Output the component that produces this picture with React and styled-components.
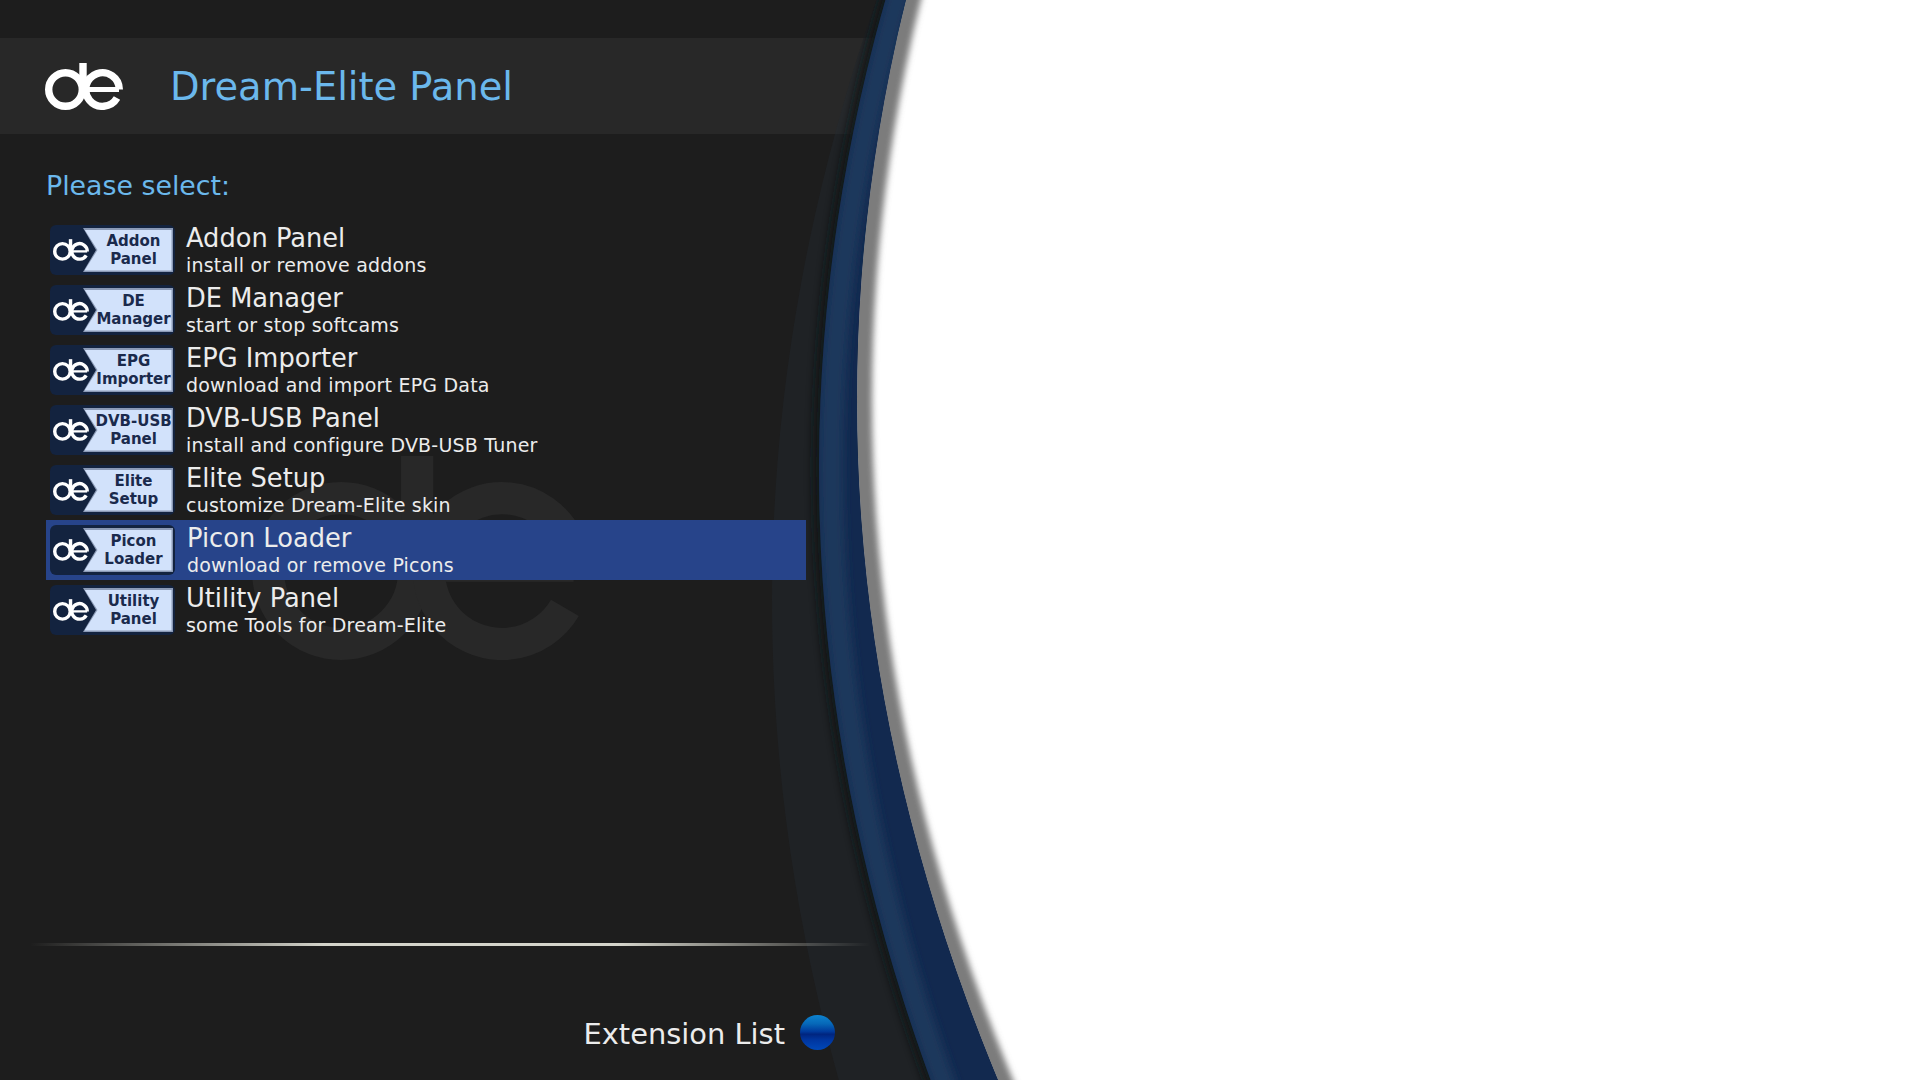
import React from "react";
import styled, { createGlobalStyle } from "styled-components";

const Global = createGlobalStyle`
  html, body { margin: 0; padding: 0; background: #fff; }
  body { font-family: "DejaVu Sans", "Liberation Sans", sans-serif; overflow: hidden; }
`;

const Page = styled.div`
  position: relative;
  width: 1920px;
  height: 1080px;
  overflow: hidden;
  background: #1d1d1d;
  display: flex;
  flex-direction: column;
`;

const Header = styled.header`
  margin-top: 38px;
  height: 96px;
  background: #282828;
  display: flex;
  align-items: center;
  padding-left: 45px;
  gap: 48px;
`;

const HeaderLogo = styled.svg`
  width: 78px;
  height: 47px;
  flex: none;
  color: #fff;
`;

const HeaderTitle = styled.h1`
  margin: 1px 0 0 -1px;
  font-size: 38.4px;
  font-weight: 400;
  color: #6bb8ec;
`;

const Main = styled.main`
  position: relative;
  z-index: 2;
  flex: 1;
  width: 880px;
  display: flex;
  flex-direction: column;
  padding: 0 0 0 46px;
  box-sizing: border-box;
`;

const Prompt = styled.div`
  margin-top: 34px;
  height: 52px;
  font-size: 26.8px;
  line-height: 36px;
  color: #6bb8ec;
`;

const List = styled.ul`
  list-style: none;
  margin: 0;
  padding: 0;
  width: 760px;
`;

const Row = styled.li`
  height: 60px;
  display: flex;
  align-items: center;
  background: ${(p) => (p.$selected ? "#27448a" : "transparent")};
  padding-left: 4px;
`;

const Badge = styled.div`
  width: 125px;
  height: 50px;
  box-sizing: border-box;
  padding: 3px 2px 3px 3px;
  border-radius: 6px;
  background: #13233f;
  display: flex;
  align-items: stretch;
  flex: none;
`;

const BadgeLogo = styled.svg`
  width: 36px;
  height: 22px;
  margin: 11px -6px 0 0;
  flex: none;
  position: relative;
  z-index: 1;
  color: #fff;
`;

const Plate = styled.div`
  flex: 1;
  padding: 1.5px;
  background: #8b9ab6;
  clip-path: polygon(0 0, 100% 0, 100% 100%, 0 100%, 13px 50%);
  display: flex;
`;

const PlateFace = styled.div`
  flex: 1;
  background: #d2e2fb;
  clip-path: polygon(0 0, 100% 0, 100% 100%, 0 100%, 13px 50%);
  display: flex;
  align-items: center;
  justify-content: center;
  padding-left: 11px;
  font-size: 15px;
  line-height: 18px;
  font-weight: 700;
  color: #1a2a4c;
  text-align: center;
  white-space: pre;
`;

const RowText = styled.div`
  align-self: flex-start;
  margin: 1px 0 0 ${(p) => (p.$selected ? 12 : 11)}px;
  display: flex;
  flex-direction: column;
`;

const RowTitle = styled.div`
  font-size: 25.7px;
  line-height: 34px;
  color: #ececec;
`;

const RowSub = styled.div`
  font-size: 19px;
  line-height: 21px;
  letter-spacing: 0.2px;
  color: #ececec;
`;

const Divider = styled.div`
  position: absolute;
  left: 30px;
  top: 809px;
  width: 840px;
  height: 3px;
  background: linear-gradient(90deg, rgba(222,222,212,0) 0%, rgba(222,222,212,0.95) 35%, rgba(222,222,212,0.95) 70%, rgba(222,222,212,0) 100%);
`;

const Footer = styled.footer`
  margin-top: auto;
  height: 65px;
  margin-bottom: 14px;
  display: flex;
  justify-content: flex-end;
  align-items: center;
  gap: 15px;
  width: 789px;
`;

const FooterLabel = styled.span`
  font-size: 28.9px;
  color: #ececec;
`;

const Ball = styled.span`
  width: 35px;
  height: 35px;
  border-radius: 50%;
  flex: none;
  margin-top: -2px;
  background: linear-gradient(180deg, #0d83cf 0%, #0668b8 25%, #003a9c 47%, #00257f 55%, #0036a0 72%, #0048b8 100%);
`;

const Watermark = styled.svg`
  position: absolute;
  left: 252px;
  top: 456px;
  width: 339px;
  height: 204px;
  color: #282828;
`;

const Curve = styled.svg`
  position: absolute;
  inset: 0;
  width: 1920px;
  height: 1080px;
`;

function spline(points) {
  let d = `M${points[0][0]} ${points[0][1]}`;
  for (let i = 0; i < points.length - 1; i++) {
    const p0 = points[Math.max(i - 1, 0)];
    const p1 = points[i];
    const p2 = points[i + 1];
    const p3 = points[Math.min(i + 2, points.length - 1)];
    const c1x = p1[0] + (p2[0] - p0[0]) / 6;
    const c1y = p1[1] + (p2[1] - p0[1]) / 6;
    const c2x = p2[0] - (p3[0] - p1[0]) / 6;
    const c2y = p2[1] - (p3[1] - p1[1]) / 6;
    d += ` C${c1x} ${c1y} ${c2x} ${c2y} ${p2[0]} ${p2[1]}`;
  }
  return d;
}

const parabola = (x0, k, c, dx = 0) => {
  const pts = [];
  for (let y = -20; y <= 1180; y += 60) pts.push([x0 + dx + k * (y - c) * (y - c), y]);
  return pts;
};

const blueLeft = parabola(819, 3.0e-4, 470);
const blueRight = parabola(857, 3.05e-4, 400);
const slateLeft = parabola(772, 2.9e-4, 600);

const rev = (pts) => [...pts].reverse();
const continueTo = (pts) => spline(pts).replace(/^M/, "L");

const bandPath = `${spline(blueLeft)} ${continueTo(rev(blueRight))} Z`;
const slatePath = `${spline(slateLeft)} ${continueTo(rev(blueRight))} Z`;
const shadowPath = `${spline(parabola(857, 3.05e-4, 400, 15))} L700 1180 L700 -20 Z`;
const whitePath = `${spline(blueRight)} L1930 1180 L1930 -20 Z`;
const bandLight = `${spline(blueLeft)} ${continueTo(rev(parabola(819, 3.0e-4, 470, 24)))} Z`;

function DeMark() {
  return (
    <g fill="none" stroke="currentColor">
      <circle cx="20.5" cy="26.5" r="16.8" strokeWidth="7.4" />
      <path d="M38 0V26" strokeWidth="7.4" />
      <path d="M41 26.5H74" strokeWidth="5" />
      <path d="M74.3 26.5A16.8 16.8 0 1 0 72 35" strokeWidth="7.4" />
    </g>
  );
}

const items = [
  ["Addon\nPanel", "Addon Panel", "install or remove addons"],
  ["DE\nManager", "DE Manager", "start or stop softcams"],
  ["EPG\nImporter", "EPG Importer", "download and import EPG Data"],
  ["DVB-USB\nPanel", "DVB-USB Panel", "install and configure DVB-USB Tuner"],
  ["Elite\nSetup", "Elite Setup", "customize Dream-Elite skin"],
  ["Picon\nLoader", "Picon Loader", "download or remove Picons"],
  ["Utility\nPanel", "Utility Panel", "some Tools for Dream-Elite"],
];

export default function App() {
  return (
    <Page>
      <Global />
      <Header>
        <HeaderLogo viewBox="0 0 78 47">
          <DeMark />
        </HeaderLogo>
        <HeaderTitle>Dream-Elite Panel</HeaderTitle>
      </Header>
      <Watermark viewBox="0 0 78 47" preserveAspectRatio="none">
        <DeMark />
      </Watermark>
      <Curve viewBox="0 0 1920 1080">
        <defs>
          <filter id="b3" x="-10%" y="-10%" width="120%" height="120%"><feGaussianBlur stdDeviation="3" /></filter>
          <filter id="b4" x="-20%" y="-10%" width="140%" height="120%"><feGaussianBlur stdDeviation="4" /></filter>
          <clipPath id="band"><path d={bandPath} /></clipPath>
          <clipPath id="slate"><path d={slatePath} /></clipPath>
          <clipPath id="outside"><path d={whitePath} /></clipPath>
        </defs>
        <path d={slatePath} fill="rgba(34,42,50,0.4)" />
        <g clipPath="url(#slate)">
          <path d={spline(blueLeft)} fill="none" stroke="#111315" strokeWidth="12" filter="url(#b4)" opacity="0.85" />
        </g>
        <path d={whitePath} fill="#fff" />
        <g clipPath="url(#outside)">
          <path d={shadowPath} fill="#7c7c7c" filter="url(#b3)" />
        </g>
        <path d={bandPath} fill="#12294f" />
        <g clipPath="url(#band)">
          <path d={bandLight} fill="#1e375c" filter="url(#b4)" />
        </g>
      </Curve>
      <Main>
        <Prompt>Please select:</Prompt>
        <List>
          {items.map(([badge, title, sub], i) => (
            <Row key={title} $selected={i === 5}>
              <Badge>
                <BadgeLogo viewBox="0 0 78 47">
                  <DeMark />
                </BadgeLogo>
                <Plate>
                  <PlateFace>{badge}</PlateFace>
                </Plate>
              </Badge>
              <RowText $selected={i === 5}>
                <RowTitle>{title}</RowTitle>
                <RowSub>{sub}</RowSub>
              </RowText>
            </Row>
          ))}
        </List>
        <Divider />
        <Footer>
          <FooterLabel>Extension List</FooterLabel>
          <Ball />
        </Footer>
      </Main>
    </Page>
  );
}
